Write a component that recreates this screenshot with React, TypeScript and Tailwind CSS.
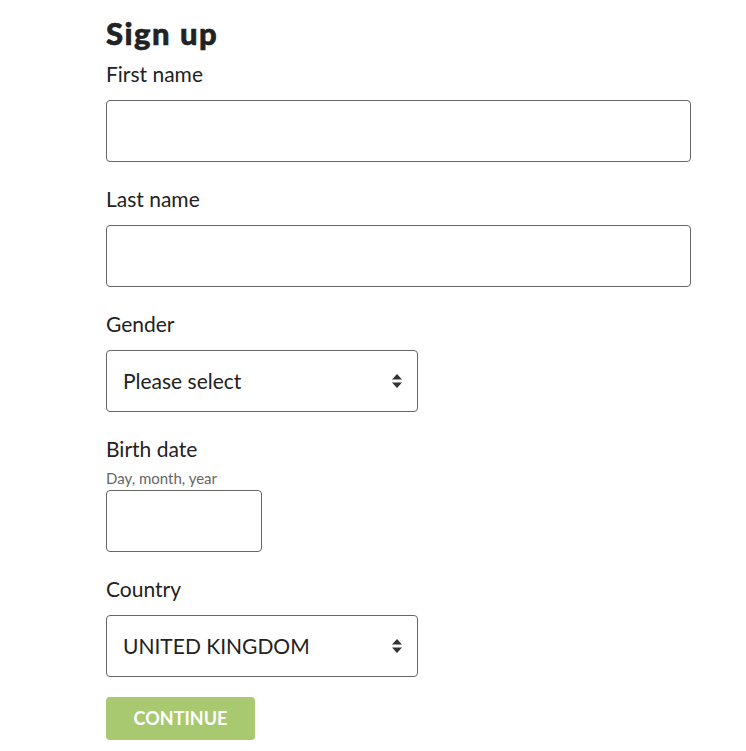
import { useState } from "react";

const font = { fontFamily: "Lato, 'Open Sans', sans-serif" };

function SortIcon() {
  return (
    <svg
      width="10"
      height="14"
      viewBox="0 0 10 14"
      className="pointer-events-none absolute right-[16px] top-1/2 -translate-y-1/2"
    >
      <path d="M0 5.5 L5 0 L10 5.5 Z" fill="#333" />
      <path d="M0 8.5 L5 14 L10 8.5 Z" fill="#333" />
    </svg>
  );
}

function Field({ label, children, hint, first }: { label: string; children: React.ReactNode; hint?: string; first?: boolean }) {
  return (
    <div className={first ? "" : "mt-[22px]"}>
      <label className={`block text-[21px] leading-[30px] text-[#222] ${hint ? "" : "mb-[11px]"}`}>{label}</label>
      {hint && <p className="mt-[4px] mb-[2px] text-[15px] leading-[20px] text-[#666]">{hint}</p>}
      {children}
    </div>
  );
}

export default function App() {
  const [gender, setGender] = useState("");
  const [country, setCountry] = useState("GB");

  return (
    <div className="min-h-screen bg-white" style={font}>
      <form className="ml-[106px] w-[585px] pt-[15px]" onSubmit={(e) => e.preventDefault()}>
        <h1 className="mb-[8px] text-[31px] leading-[36px] font-black tracking-[1.5px] text-[#222] [-webkit-text-stroke:0.6px_#222]">
          Sign up
        </h1>

        <Field label="First name" first>
          <input className="block h-[62px] w-full rounded-[4px] border border-[#666] px-4 text-[21px] outline-none" />
        </Field>

        <Field label="Last name">
          <input className="block h-[62px] w-full rounded-[4px] border border-[#666] px-4 text-[21px] outline-none" />
        </Field>

        <Field label="Gender">
          <div className="relative w-[312px]">
            <select
              value={gender}
              onChange={(e) => setGender(e.target.value)}
              className="block h-[62px] w-full appearance-none rounded-[4px] border border-[#666] bg-white pl-[16px] pr-10 text-[21px] text-[#222] outline-none"
            >
              <option value="">Please select</option>
              <option value="f">Female</option>
              <option value="m">Male</option>
            </select>
            <SortIcon />
          </div>
        </Field>

        <Field label="Birth date" hint="Day, month, year">
          <input className="block h-[62px] w-[156px] rounded-[4px] border border-[#666] px-4 text-[21px] outline-none" />
        </Field>

        <Field label="Country">
          <div className="relative w-[312px]">
            <select
              value={country}
              onChange={(e) => setCountry(e.target.value)}
              className="block h-[62px] w-full appearance-none rounded-[4px] border border-[#666] bg-white pl-[16px] pr-10 text-[21px] text-[#222] outline-none"
            >
              <option value="GB">UNITED KINGDOM</option>
              <option value="IE">IRELAND</option>
            </select>
            <SortIcon />
          </div>
        </Field>

        <button
          type="submit"
          className="mt-[20px] flex h-[43px] w-[149px] items-center justify-center rounded-[4px] bg-[#a9c970] text-[18px] font-bold text-white"
        >
          CONTINUE
        </button>
      </form>
    </div>
  );
}
